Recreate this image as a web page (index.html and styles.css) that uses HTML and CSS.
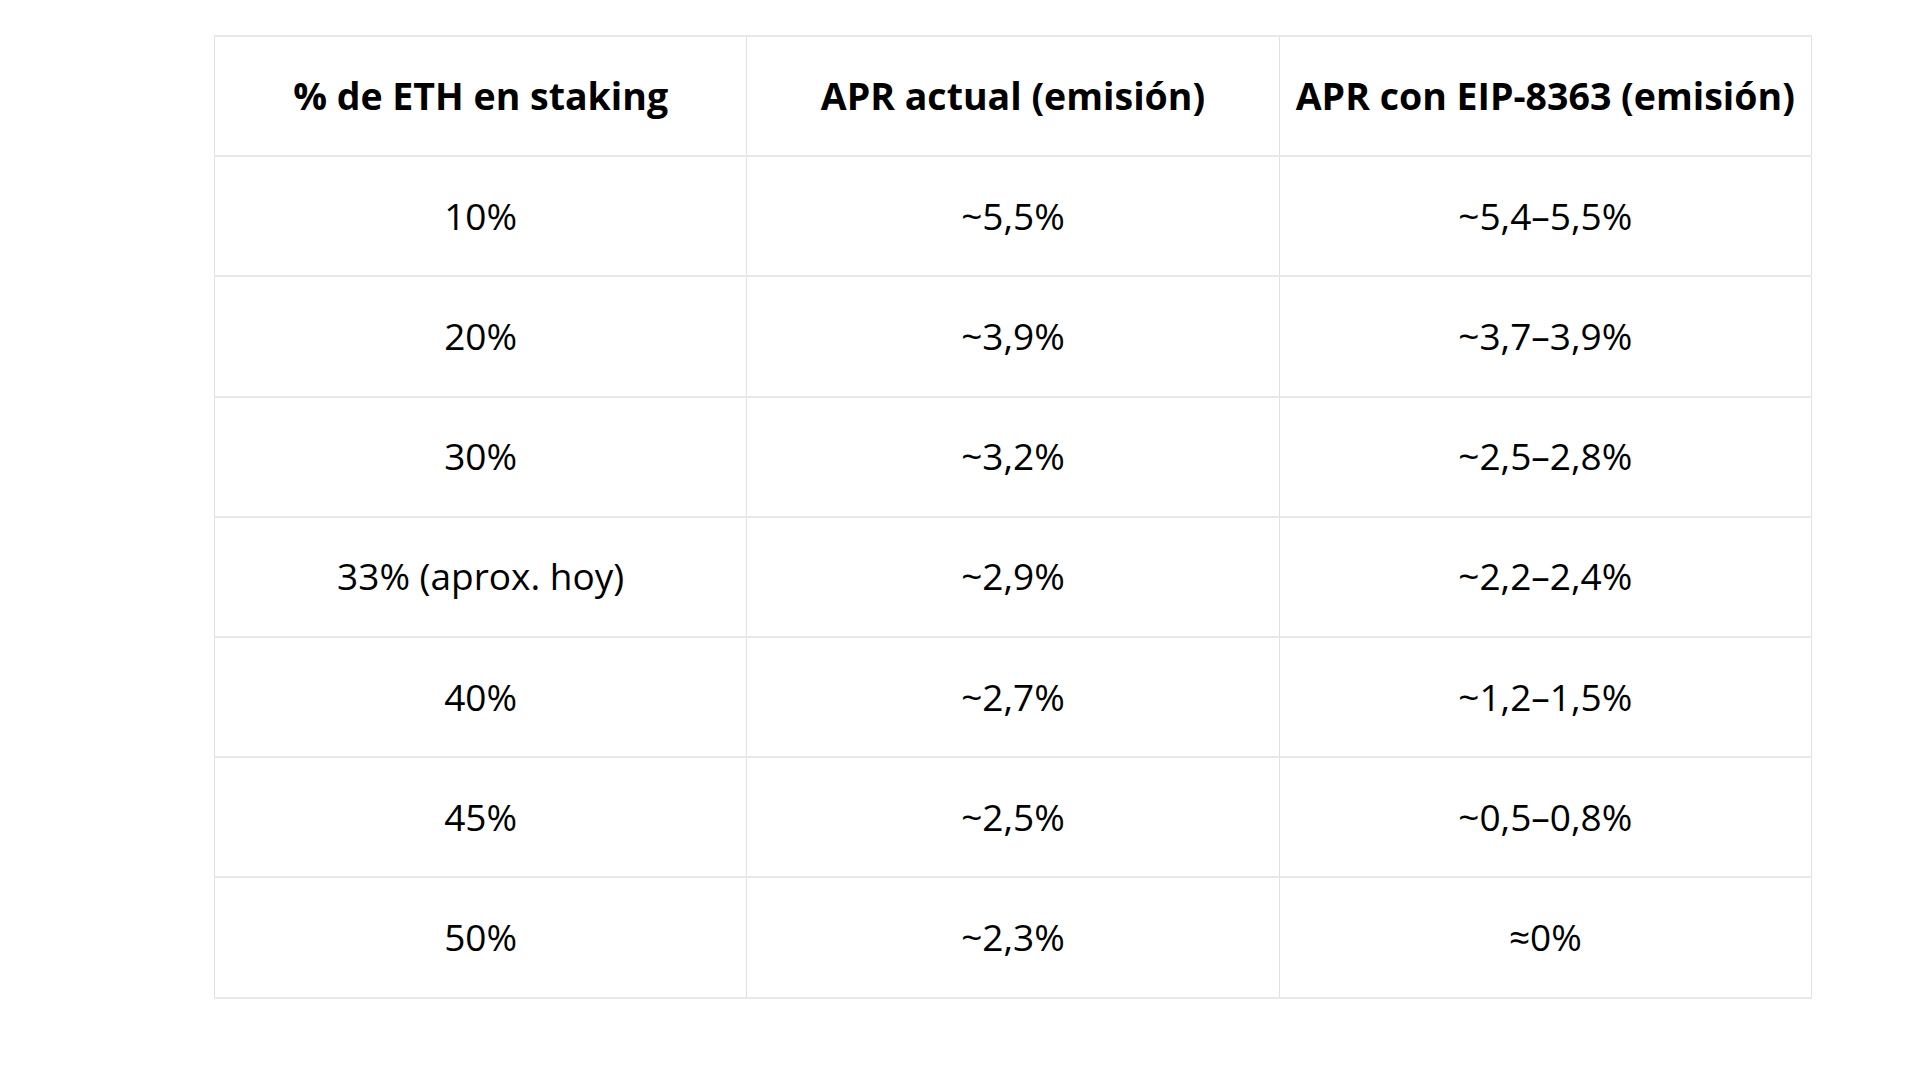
FILE: index.html
```html
<!DOCTYPE html>
<html lang="es">
<head>
<meta charset="utf-8">
<title>APR staking ETH</title>
<link rel="stylesheet" href="styles.css">
</head>
<body>
<main class="page">
  <table class="apr-table">
    <thead>
      <tr>
        <th>% de ETH en staking</th>
        <th>APR actual (emisión)</th>
        <th>APR con EIP-8363 (emisión)</th>
      </tr>
    </thead>
    <tbody>
      <tr><td>10%</td><td>~5,5%</td><td>~5,4–5,5%</td></tr>
      <tr><td>20%</td><td>~3,9%</td><td>~3,7–3,9%</td></tr>
      <tr><td>30%</td><td>~3,2%</td><td>~2,5–2,8%</td></tr>
      <tr><td>33% (aprox. hoy)</td><td>~2,9%</td><td>~2,2–2,4%</td></tr>
      <tr><td>40%</td><td>~2,7%</td><td>~1,2–1,5%</td></tr>
      <tr><td>45%</td><td>~2,5%</td><td>~0,5–0,8%</td></tr>
      <tr><td>50%</td><td>~2,3%</td><td>≈0%</td></tr>
    </tbody>
  </table>
</main>
</body>
</html>
```

FILE: styles.css
```css
html, body {
  margin: 0;
  padding: 0;
  background: #ffffff;
}

body {
  font-family: "Open Sans", "Noto Sans", sans-serif;
  color: #000000;
}

.page {
  padding: 35px 0 0 214px;
}

.apr-table {
  width: 1598px;
  border-collapse: collapse;
  table-layout: fixed;
}

.apr-table th,
.apr-table td {
  border: 1px solid #e2e2e2;
  border-top: 2px solid #e8e8e8;
  border-bottom: 2px solid #e8e8e8;
  height: 116.2px;
  padding: 0 8px 2px;
  text-align: center;
  vertical-align: middle;
  white-space: nowrap;
}

.apr-table th {
  font-size: 37.5px;
  font-weight: 700;
}

.apr-table td {
  font-size: 37px;
  font-weight: 400;
}
```
